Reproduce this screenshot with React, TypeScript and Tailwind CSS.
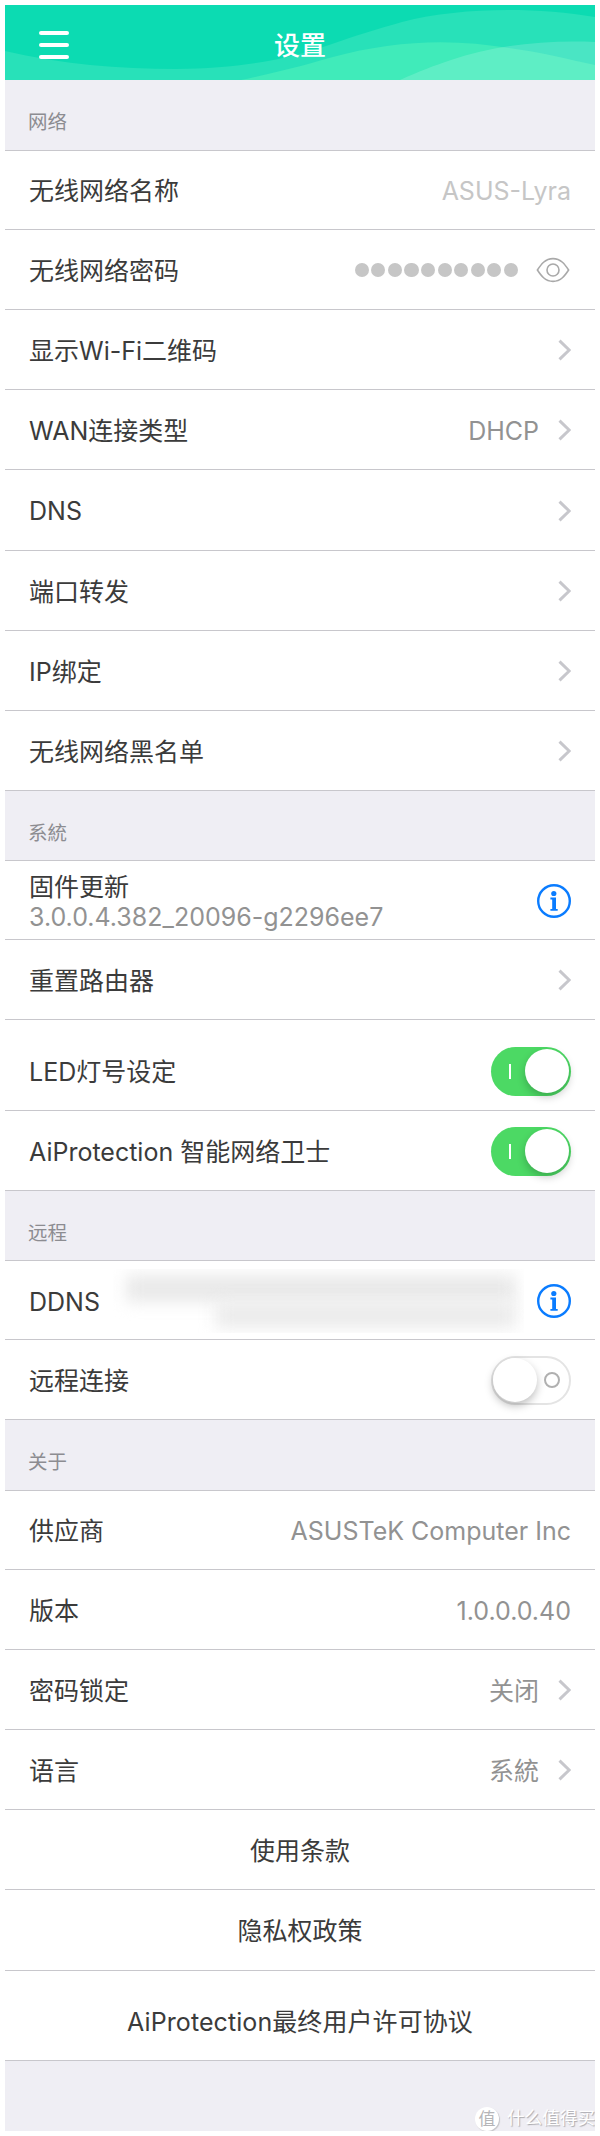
import type { ReactNode } from 'react';
import clsx from 'clsx';

const Chevron = () => (
  <svg width="13" height="22" viewBox="0 0 13 22" fill="none" className="shrink-0">
    <path d="M1.5 1.6 11.2 11 1.5 20.4" stroke="#c7c7cc" strokeWidth="3" />
  </svg>
);

const EyeIcon = () => (
  <svg width="34" height="26" viewBox="0 0 34 26" fill="none" stroke="#a9a9a9" strokeWidth="1.6" className="mr-px">
    <path d="M1.4 13C5 7.5 9 1.6 17 1.6S29 7.5 32.6 13C29 18.5 25 24.4 17 24.4S5 18.5 1.4 13Z" />
    <circle cx="17" cy="13" r="6" />
  </svg>
);

const InfoIcon = () => (
  <svg width="34" height="34" viewBox="0 0 34 34" fill="none">
    <circle cx="17" cy="17" r="15.8" stroke="#0a7cff" strokeWidth="2.4" />
    <circle cx="16.8" cy="9.5" r="2.6" fill="#0a7cff" />
    <path d="M13.4 13.6h5.6v11.4h1.7v1.8h-7.3v-1.8h1.8v-9.6h-1.8z" fill="#0a7cff" />
  </svg>
);

const Toggle = ({ on = false }: { on?: boolean }) => (
  <div
    className={clsx(
      'flex h-[49px] w-20 items-center rounded-full',
      on ? 'bg-[#4cd964] pr-[2px]' : 'border-2 border-[#e4e4e4] bg-white'
    )}
  >
    {on && (
      <>
        <span className="ml-[18px] h-[15px] w-[2px] bg-white" />
        <span className="ml-auto size-11 rounded-full bg-white shadow-[0_4px_8px_rgba(0,0,0,0.22)]" />
      </>
    )}
    {!on && (
      <>
        <span className="size-11 rounded-full bg-white shadow-[0_4px_8px_rgba(0,0,0,0.25)]" />
        <span className="ml-[7px] size-4 rounded-full border-[2.5px] border-[#b0b0b0]" />
      </>
    )}
  </div>
);

const Dots = () => (
  <div className="mr-[18px] flex gap-[2.4px]">
    {Array.from({ length: 10 }).map((_, i) => (
      <span key={i} className="size-[14.2px] rounded-full bg-[#c6c6c6]" />
    ))}
  </div>
);

// stand-in for the hidden DDNS host name
const HiddenHost = () => (
  <div className="mr-[13px] flex h-[64px] w-[411px] flex-col items-end justify-center overflow-hidden pr-[8px]">
    <span className="h-[27px] w-[390px] bg-[#e9e9e9] blur-[8px]" />
    <span className="h-[26px] w-[300px] bg-[#ebebeb] blur-[8px]" />
  </div>
);

const Section = ({ title, className = 'h-[70px]' }: { title: string; className?: string }) => (
  <div className={clsx('flex items-center border-b border-[#c8c7cc] bg-[#efeef4] pt-[14px] pl-[23px] text-[19.5px] text-[#8c8c91]', className)}>
    {title}
  </div>
);

type RowProps = { label: string; value?: string; arrow?: boolean; className?: string; valueClass?: string; children?: ReactNode };

const Row = ({ label, value, arrow, className = 'h-20 pt-px', valueClass = 'text-[#929292]', children }: RowProps) => (
  <div className={clsx('flex items-center border-b border-[#c8c7cc] pr-6 pl-6', className)}>
    <span className="pt-px whitespace-nowrap">{label}</span>
    <div className="ml-auto flex items-center">
      {value && <span className={clsx('pt-px whitespace-nowrap', arrow && 'mr-[19px]', valueClass)}>{value}</span>}
      {children}
      {arrow && <Chevron />}
    </div>
  </div>
);

const LinkRow = ({ label, className = 'h-20 pt-[2px]' }: { label: string; className?: string }) => (
  <div className={clsx('flex items-center justify-center border-b border-[#c8c7cc]', className)}>{label}</div>
);

const Header = () => (
  <div className="relative flex h-[75px] items-center overflow-hidden bg-[#0cdbb2]">
    <svg className="absolute inset-0" width="590" height="75" viewBox="0 0 590 75">
      <path d="M0 46C55 59 115 64 171 64C232 63 278 56 324 40C350 31 372 24 397 17C455 2 530 2 590 12V75H0Z" fill="#28e1b9" />
      <path d="M236 75C268 68 294 62 324 53C392 34 450 34 504 43C535 47 562 54 590 60V75Z" fill="#40ebba" />
      <path d="M395 75C415 66 428 61 446 55C490 40 540 35 590 37V75Z" fill="#fff" fillOpacity="0.16" />
    </svg>
    <div className="relative ml-[34px] flex w-[30px] flex-col gap-[8px] pt-[5px]">
      <span className="h-1 rounded-sm bg-white" />
      <span className="h-1 rounded-sm bg-white" />
      <span className="h-1 rounded-sm bg-white" />
    </div>
    <h1 className="relative ml-[180px] w-[102px] pt-[6px] text-center text-[26px] leading-9 font-medium text-white">设置</h1>
  </div>
);

export default function App() {
  return (
    <div
      lang="zh-CN"
      className="h-[2136px] w-[600px] overflow-hidden bg-white px-[5px] pt-[5px] font-['Inter','Noto_Sans_CJK_SC',sans-serif] text-[25px] leading-[30px] text-[#3b3b3b]"
    >
      <Header />

      <Section title="网络" className="h-[71px]" />
      <Row label="无线网络名称" value="ASUS-Lyra" valueClass="text-[#c6c6c6]" className="h-[79px] pt-px" />
      <Row label="无线网络密码">
        <Dots />
        <EyeIcon />
      </Row>
      <Row label="显示Wi-Fi二维码" arrow />
      <Row label="WAN连接类型" value="DHCP" arrow />
      <Row label="DNS" arrow className="h-[81px] pt-px" />
      <Row label="端口转发" arrow />
      <Row label="IP绑定" arrow />
      <Row label="无线网络黑名单" arrow />

      <Section title="系統" />
      <div className="flex h-[79px] items-center justify-between border-b border-[#c8c7cc] pt-px pr-6 pl-6">
        <div className="pt-[2px]">
          <p>固件更新</p>
          <p className="text-[#929292]">3.0.0.4.382_20096-g2296ee7</p>
        </div>
        <InfoIcon />
      </div>
      <Row label="重置路由器" arrow />
      <Row label="LED灯号设定" className="h-[91px] pt-3">
        <Toggle on />
      </Row>
      <Row label="AiProtection 智能网络卫士">
        <Toggle on />
      </Row>

      <Section title="远程" />
      <Row label="DDNS" className="h-[79px] pt-[2px]">
        <HiddenHost />
        <InfoIcon />
      </Row>
      <Row label="远程连接">
        <Toggle />
      </Row>

      <Section title="关于" className="h-[71px]" />
      <Row label="供应商" value="ASUSTeK Computer Inc" className="h-[79px] pt-px" />
      <Row label="版本" value="1.0.0.0.40" />
      <Row label="密码锁定" value="关闭" arrow />
      <Row label="语言" value="系統" arrow />
      <LinkRow label="使用条款" />
      <LinkRow label="隐私权政策" className="h-[81px] pt-[2px]" />
      <LinkRow label="AiProtection最终用户许可协议" className="h-[90px] pt-3 tracking-[0.08px]" />

      <div className="flex h-[70px] items-end justify-end overflow-hidden bg-[#efeef4]">
        <span className="mr-2 flex size-6 items-center justify-center rounded-full bg-white text-[17px] leading-none text-[#b5b5b8] shadow-[1px_1px_1px_#c4c4c8]">
          值
        </span>
        <span className="w-[88px] pb-px text-[17.6px] leading-6 whitespace-nowrap text-white [text-shadow:1px_1px_1px_#a9a9ae]">什么值得买</span>
      </div>
    </div>
  );
}
